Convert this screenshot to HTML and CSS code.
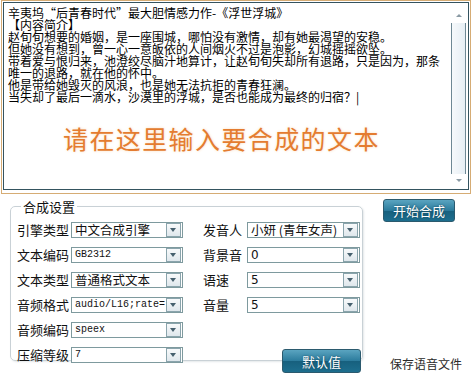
FILE: index.html
```html
<!DOCTYPE html>
<html lang="zh-CN">
<head>
    <meta charset="UTF-8">
    <meta name="viewport" content="width=device-width, initial-scale=1.0">
    <title>语音合成</title>
    <link rel="stylesheet" href="styles.css">
</head>
<body>
    <div class="editor">
        <div class="editor-inner">
            <div class="text">
                <p>辛夷坞“后青春时代”最大胆情感力作-《浮世浮城》</p>
                <p>【内容简介】</p>
                <p>赵旬旬想要的婚姻，是一座围城，哪怕没有激情，却有她最渴望的安稳。</p>
                <p>但她没有想到，曾一心一意皈依的人间烟火不过是泡影，幻城摇摇欲坠。</p>
                <p>带着爱与恨归来，池澄绞尽脑汁地算计，让赵旬旬失却所有退路，只是因为，那条</p>
                <p>唯一的退路，就在他的怀中。</p>
                <p>他是带给她毁灭的风浪，也是她无法抗拒的青春狂澜。</p>
                <p>当失却了最后一滴水，沙漠里的浮城，是否也能成为最终的归宿？|</p>
                <div class="hint">请在这里输入要合成的文本</div>
            </div>
            <div class="scrollbar">
                <div class="arrow up"></div>
                <div class="thumb"></div>
                <div class="arrow down"></div>
            </div>
        </div>
    </div>

    <div class="bottom">
        <fieldset class="group">
            <legend>合成设置</legend>
            <div class="grid">
                <label>引擎类型</label>
                <div class="combo"><span>中文合成引擎</span><i></i></div>
                <label class="r">发音人</label>
                <div class="combo"><span>小妍 (青年女声)</span><i></i></div>

                <label>文本编码</label>
                <div class="combo mono"><span>GB2312</span><i></i></div>
                <label class="r">背景音</label>
                <div class="combo sans"><span>0</span><i></i></div>

                <label>文本类型</label>
                <div class="combo"><span>普通格式文本</span><i></i></div>
                <label class="r">语速</label>
                <div class="combo sans"><span>5</span><i></i></div>

                <label>音频格式</label>
                <div class="combo mono"><span>audio/L16;rate=</span><i></i></div>
                <label class="r">音量</label>
                <div class="combo sans"><span>5</span><i></i></div>

                <label>音频编码</label>
                <div class="combo mono"><span>speex</span><i></i></div>
                <div class="empty"></div>

                <label>压缩等级</label>
                <div class="combo mono"><span>7</span><i></i></div>
                <div class="btn-cell"><button class="btn default">默认值</button></div>
            </div>
        </fieldset>
        <div class="side">
            <button class="btn start">开始合成</button>
            <div class="save">保存语音文件</div>
        </div>
    </div>
</body>
</html>
```

FILE: styles.css
```css
body {
    margin: 0;
    padding: 0;
    background: #fff;
    font-family: "Noto Sans CJK SC", "DejaVu Sans", sans-serif;
    color: #111;
    width: 474px;
    height: 373px;
    overflow: hidden;
}
.editor {
    margin-left: 1px;
    width: 466px;
    height: 190px;
    border: 1px solid #d6ac74;
    padding: 1px;
}
.editor-inner {
    height: 188px;
    border: 1px solid #34535f;
    display: flex;
    box-sizing: border-box;
}
.text {
    flex: 1;
    padding: 4px 0 0 4px;
    font-size: 12px;
    line-height: 12px;
    color: #000;
}
.text p {
    margin: 0;
    white-space: nowrap;
}
.hint {
    margin: 21px 0 0 55px;
    font-size: 25px;
    line-height: 28px;
    letter-spacing: 1.4px;
    color: #e47c30;
    text-shadow: 0 0 3px #f9dcbc;
}
.scrollbar {
    width: 15px;
    margin: 8px 2px 4px 0;
    display: flex;
    flex-direction: column;
    align-items: center;
}
.arrow {
    width: 0;
    height: 0;
    border-left: 3px solid transparent;
    border-right: 3px solid transparent;
}
.arrow.up {
    border-bottom: 3px solid #8a9aa4;
    margin: 3px 0 6px;
}
.arrow.down {
    border-top: 3px solid #8a9aa4;
    margin: 5px 0 3px;
}
.thumb {
    flex: 1;
    width: 13px;
    border-left: 1px solid #6e8894;
    border-right: 1px solid #6e8894;
    background: linear-gradient(to right, #f6f9fb, #e6eef4);
}
.bottom {
    display: flex;
    align-items: flex-start;
}
.group {
    margin: 5px 0 0 10px;
    width: 343px;
    height: 160px;
    padding: 0 2px 0 6px;
    border: 1px solid #c9d1d6;
    border-radius: 5px;
    box-shadow: 1px 1px 2px #e4e8ea;
    font-size: 13px;
}
.group legend {
    padding: 0 2px;
    margin-left: 4px;
    line-height: 15px;
}
.grid {
    margin-top: 8px;
    display: grid;
    grid-template-columns: 54px 112px 64px 113px;
    grid-auto-rows: 16px;
    row-gap: 9px;
}
.grid label {
    line-height: 16px;
    white-space: nowrap;
}
.grid label.r {
    padding-left: 20px;
}
.combo {
    border: 1px solid #7e9a9e;
    background: #fff;
    display: flex;
    align-items: center;
    justify-content: space-between;
    box-sizing: border-box;
    height: 16px;
    padding-left: 3px;
    font-size: 12.5px;
    line-height: 14px;
    white-space: nowrap;
}
.combo span {
    min-width: 0;
}
.combo.mono span {
    font-family: "Liberation Mono", monospace;
    font-size: 10px;
}
.combo.sans span {
    font-family: "DejaVu Sans", sans-serif;
    font-size: 12px;
}
.combo i {
    flex: none;
    width: 13px;
    height: 12px;
    margin-right: 1px;
    border: 1px solid #8aa4ac;
    background: linear-gradient(#f8fafb, #dfe7ec);
    position: relative;
}
.combo i::after {
    content: "";
    position: absolute;
    left: 3px;
    top: 4px;
    border-left: 3.5px solid transparent;
    border-right: 3.5px solid transparent;
    border-top: 4px solid #46606e;
}
.empty {
    grid-column: span 2;
}
.btn-cell {
    grid-column: span 2;
    display: flex;
    justify-content: flex-end;
    margin-right: -1px;
}
.btn {
    font-family: "Noto Sans CJK SC", sans-serif;
    font-size: 13px;
    color: #fff;
    border: 1px solid #2b5a6e;
    border-radius: 3px;
    background: linear-gradient(#5aa4c0, #2b7b9c 50%, #17607e 51%, #1d6e8e);
    text-shadow: 0 0 2px #0c3a4e;
    padding: 0;
    cursor: pointer;
}
.btn.default {
    width: 79px;
    height: 24px;
    margin-top: 2px;
}
.btn.start {
    width: 72px;
    height: 23px;
}
.side {
    margin: 5px 0 0 20px;
    display: flex;
    flex-direction: column;
}
.save {
    margin: 135px 0 0 7px;
    font-size: 12px;
    line-height: 14px;
    color: #2a2a2a;
}
```
